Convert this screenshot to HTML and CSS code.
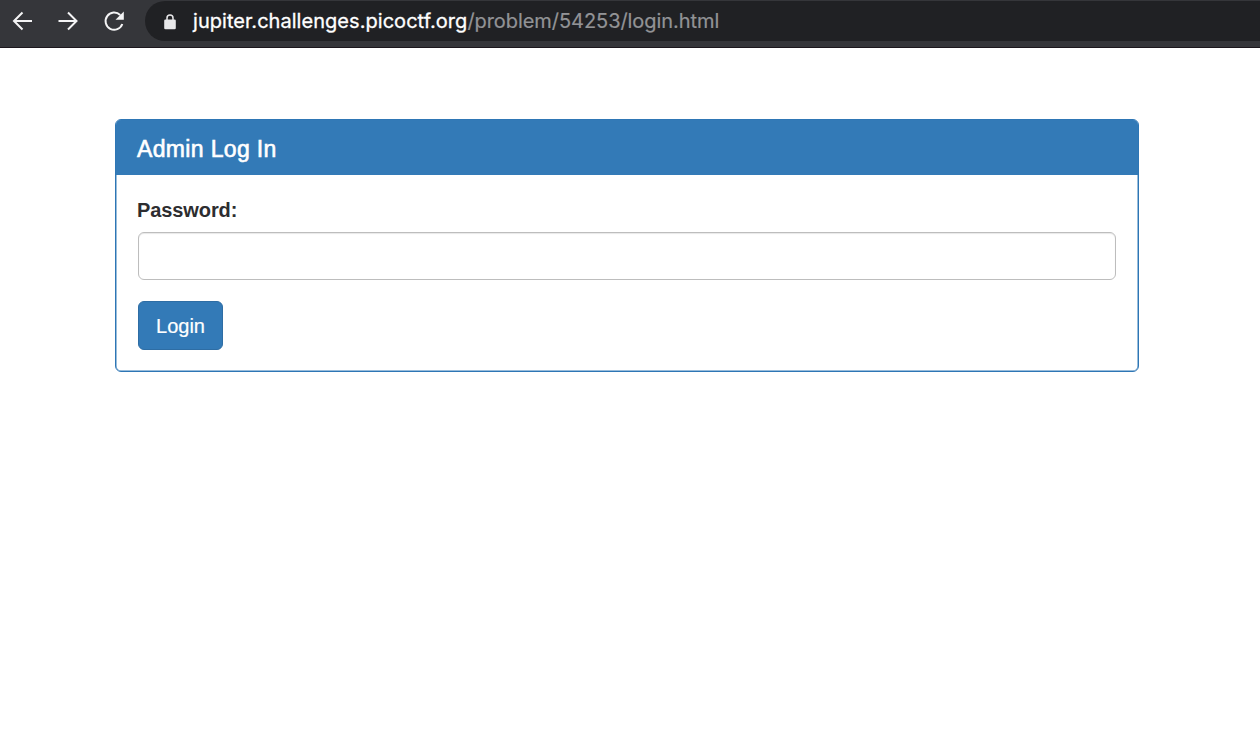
FILE: index.html
```html
<!DOCTYPE html>
<html lang="en">
<head>
<meta charset="utf-8">
<title>Admin Log In</title>
<link rel="stylesheet" href="styles.css">
</head>
<body>
<header class="toolbar">
  <nav class="nav">
    <svg class="icon" viewBox="0 0 24 24"><path d="M22 12H4M12.500 3.500 4 12l8.500 8.500"/></svg>
    <svg class="icon" viewBox="0 0 24 24"><path d="M2.500 12H20.500M12 3.500 20.500 12 12 20.500"/></svg>
    <svg class="icon" viewBox="0 0 24 24"><path d="M20.300 15A8.600 8.600 0 1 1 18.200 6"/><path class="solid" d="M21.800 2.500v8.300h-8.300z"/></svg>
  </nav>
  <div class="address">
    <svg class="lock" viewBox="0 0 12 16"><path class="shackle" d="M3 6V4a3 3 0 0 1 6 0v2"/><rect x="0.200" y="5.500" width="11.600" height="9.700" rx="1.300"/></svg>
    <span class="url"><span class="host">jupiter.challenges.picoctf.org</span><span class="path">/problem/54253/login.html</span></span>
  </div>
</header>
<main class="page">
  <section class="panel">
    <div class="panel-heading"><h3 class="panel-title">Admin Log In</h3></div>
    <form class="panel-body">
      <label class="label" for="password">Password:</label>
      <input class="field" type="password" id="password">
      <button class="button" type="button">Login</button>
    </form>
  </section>
</main>
</body>
</html>
```
FILE: styles.css
```css
* { box-sizing: border-box; }
body {
  margin: 0;
  background: #fff;
  color: #2d2d30;
  font-family: "Liberation Sans", Arial, sans-serif;
  font-size: 20px;
}
.toolbar {
  display: flex;
  height: 48px;
  padding-top: 1px;
  background: #35363a;
  border-bottom: 1px solid #1c171d;
}
.nav {
  display: flex;
  gap: 22px;
  width: 145px;
  padding: 8px 0 0 10px;
}
.icon {
  flex: none;
  width: 24px;
  height: 24px;
  fill: none;
  stroke: #f4f4f5;
  stroke-width: 2;
}
.icon .solid { fill: #f4f4f5; stroke: none; }
.address {
  display: flex;
  align-items: center;
  flex: 1;
  height: 40px;
  padding-left: 19px;
  background: #202124;
  border-radius: 20px 0 0 20px;
}
.lock { width: 12px; height: 16px; margin: 2px 17px 0 0; fill: #e8e8ea; }
.shackle { fill: none; stroke: #e8e8ea; stroke-width: 1.500; }
.url {
  font-family: Inter, sans-serif;
  font-size: 20px;
  line-height: 24px;
  white-space: nowrap;
}
.host {
  color: #fff;
  letter-spacing: 0.040px;
  -webkit-text-stroke: 0.300px #fff;
}
.path { color: #929396; letter-spacing: -0.060px; -webkit-text-stroke: 0.200px #929396; }
.page { padding: 71px 121px 0 115px; }
.panel {
  height: 253px;
  border: 1px solid #2e76b5;
  border-radius: 6px;
  box-shadow: inset 0 0 0 0.500px #337ab7;
}
.panel-heading {
  height: 55px;
  padding: 16px 21px 13px;
  background: #337ab7;
  border-radius: 5px 5px 0 0;
}
.panel-title {
  margin: 0;
  color: #fff;
  font-size: 23px;
  font-weight: 400;
  line-height: 26px;
  letter-spacing: 0.350px;
  -webkit-text-stroke: 0.600px #fff;
}
.panel-body {
  display: flex;
  flex-direction: column;
  align-items: flex-start;
  padding: 21px 22px;
}
.label {
  margin-left: -1px;
  font-weight: 700;
  line-height: 29px;
  letter-spacing: -0.100px;
}
.field {
  width: 100%;
  height: 48px;
  margin: 7px 0 21px;
  padding: 8px 17px;
  border: 1px solid #bdbdbd;
  border-radius: 6px;
  font: inherit;
  outline: 0;
  box-shadow: inset 0 1px 1px #00000018;
}
.button {
  width: 85px;
  height: 49px;
  padding: 2px 0 0;
  border: 1px solid #2e6da4;
  border-radius: 6px;
  background: #337ab7;
  color: #fff;
  font: inherit;
  -webkit-text-stroke: 0.200px #fff;
}
```
